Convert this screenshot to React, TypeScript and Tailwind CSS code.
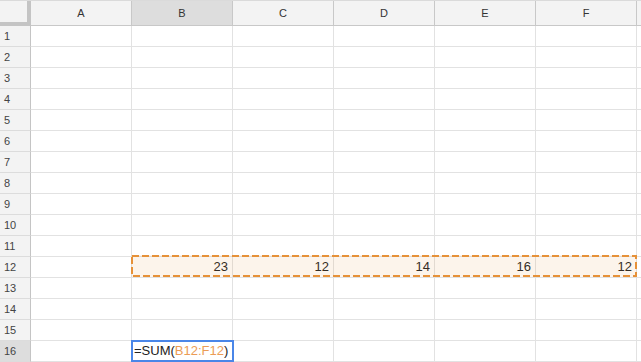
import React from "react";

const cols = ["A", "B", "C", "D", "E", "F"];
const rows = Array.from({ length: 16 }, (_, i) => i + 1);
const row12: Record<number, string> = { 1: "23", 2: "12", 3: "14", 4: "16", 5: "12" };

export default function App() {
  return (
    <div
      className="relative w-[641px] h-[362px] overflow-hidden bg-white"
      style={{ fontFamily: '"Liberation Sans", Arial, sans-serif' }}
    >
      {/* header row */}
      <div className="flex h-[26px] border-t border-[#dadada]">
        <div className="w-[31px] h-[25px] shrink-0 bg-[#f3f3f3] border-r-4 border-b-4 border-[#c4c4c4]" />
        {cols.map((c) => (
          <div
            key={c}
            className={`w-[101px] shrink-0 h-[25px] flex items-center justify-center border-r border-b border-[#c8c8c8] text-[11px] text-[#333] ${
              c === "B" ? "bg-[#dddddd]" : "bg-[#f3f3f3]"
            }`}
          >
            {c}
          </div>
        ))}
        <div className="flex-1 h-[25px] bg-[#f3f3f3] border-b border-[#c8c8c8]" />
      </div>
      {rows.map((r) => (
        <div key={r} className="flex h-[21px]">
          <div
            className={`w-[31px] shrink-0 flex items-center pl-[4px] border-r border-r-[#c4c4c4] border-b border-b-[#dcdcdc] text-[11px] text-[#444] ${
              r === 16 ? "bg-[#dddddd]" : "bg-[#f3f3f3]"
            }`}
          >
            {r}
          </div>
          {cols.map((c, ci) => (
            <div
              key={c}
              className="w-[101px] shrink-0 flex items-center justify-end pr-[4px] border-r border-b border-[#e2e2e2] text-[13px] text-[#222]"
            >
              {r === 12 ? row12[ci] ?? "" : ""}
            </div>
          ))}
          <div className="flex-1 border-b border-[#e2e2e2]" />
        </div>
      ))}

      {/* copy range overlay */}
      <div className="absolute left-[131px] top-[255px] w-[506px] h-[22px] bg-[rgba(230,145,56,0.1)] pointer-events-none">
        <svg width="506" height="22" className="absolute left-0 top-0">
          <rect
            x="1"
            y="1"
            width="504"
            height="20"
            fill="none"
            stroke="#e69138"
            strokeWidth="2"
            strokeDasharray="7 3"
          />
        </svg>
      </div>

      {/* formula editor */}
      <div className="absolute left-[131px] top-[340px] w-[103px] h-[22px] bg-white border-2 border-[#4a86e8] flex items-center pl-[1px] text-[13px] text-[#222] whitespace-nowrap">
        =SUM(<span className="text-[#eb9c55]">B12:F12</span>)
      </div>
    </div>
  );
}
